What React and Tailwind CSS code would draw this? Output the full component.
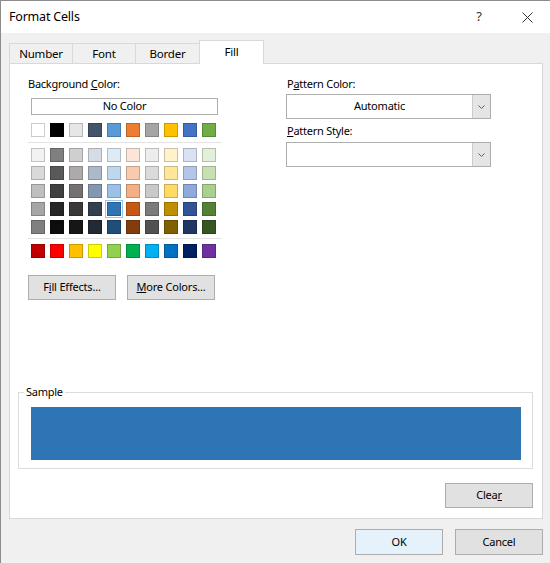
import React from "react";

// Office theme palette (top row), tints/shades below, then standard colours
const THEME = ["#FFFFFF", "#000000", "#E7E6E6", "#44546A", "#5B9BD5", "#ED7D31", "#A5A5A5", "#FFC000", "#4472C4", "#70AD47"];
const TINTS = [
  ["#F2F2F2", "#7F7F7F", "#D0CECE", "#D6DCE4", "#DDEBF7", "#FCE4D6", "#EDEDED", "#FFF2CC", "#D9E1F2", "#E2EFDA"],
  ["#D9D9D9", "#595959", "#AEAAAA", "#ACB9CA", "#BDD7EE", "#F8CBAD", "#DBDBDB", "#FFE699", "#B4C6E7", "#C6E0B4"],
  ["#BFBFBF", "#404040", "#757171", "#8497B0", "#9BC2E6", "#F4B084", "#C9C9C9", "#FFD966", "#8EA9DB", "#A9D08E"],
  ["#A6A6A6", "#262626", "#3A3838", "#333F4F", "#2F75B5", "#C65911", "#7B7B7B", "#BF8F00", "#305496", "#548235"],
  ["#808080", "#0D0D0D", "#171616", "#222A35", "#1F4E78", "#833C0C", "#525252", "#806000", "#203764", "#375623"],
];
const STANDARD = ["#C00000", "#FF0000", "#FFC000", "#FFFF00", "#92D050", "#00B050", "#00B0F0", "#0070C0", "#002060", "#7030A0"];

const SELECTED = "#2F75B5";

const Swatch = ({ color }) => (
  <div
    className={
      color === SELECTED
        ? "h-[14px] w-[14px] border border-black/20 outline-1 outline-offset-1 outline-[#9cc5ea]"
        : "h-[14px] w-[14px] border border-black/20"
    }
    style={{ backgroundColor: color }}
  />
);

const SwatchRow = ({ colors }) => (
  <div className="flex gap-[5px]">
    {colors.map((c, i) => (
      <Swatch key={i} color={c} />
    ))}
  </div>
);

const Btn = ({ children, className = "" }) => (
  <button className={"flex h-[25px] w-[88px] items-center justify-center border border-[#adadad] bg-[#e1e1e1] text-[11px] tracking-[-0.2px] text-black " + className}>
    {children}
  </button>
);

const Combo = ({ value }) => (
  <div className="flex h-[25px] w-[205px] border border-[#adadad] bg-white">
    <div className="flex flex-1 items-center justify-center text-[11px] tracking-[-0.2px]">{value}</div>
    <div className="flex w-[18px] items-center justify-center border-l border-[#cccccc] bg-[#e5e5e5]">
      <svg width="7" height="4" viewBox="0 0 7 4">
        <path d="M0.5 0.5 L3.5 3.5 L6.5 0.5" fill="none" stroke="#606060" strokeWidth="1" />
      </svg>
    </div>
  </div>
);

const Tab = ({ label, width, active }) =>
  active ? (
    <div className={"relative z-10 -mb-px flex h-[24px] items-center justify-center border border-b-0 border-[#d9d9d9] bg-white pb-[2px] text-[11.5px] tracking-[-0.2px] " + width}>
      {label}
    </div>
  ) : (
    <div className={"-mr-px flex h-[20px] items-center justify-center border border-b-0 border-[#d9d9d9] bg-[#f0f0f0] text-[11.5px] tracking-[-0.2px] " + width}>
      {label}
    </div>
  );

export default function App() {
  return (
    <div
      className="flex h-[563px] w-[550px] flex-col overflow-hidden border-l border-t border-[#8c8c8c] bg-[#f0f0f0] text-black"
      style={{ fontFamily: '"Noto Sans", "Open Sans", sans-serif' }}
    >
      {/* Title bar */}
      <div className="flex h-[32px] shrink-0 items-center bg-white pl-[8px] pr-[17px]">
        <span className="text-[12.5px] tracking-[-0.2px]">Format Cells</span>
        <span className="ml-auto text-[13px] text-[#333]">?</span>
        <svg className="ml-[40px]" width="11" height="11" viewBox="0 0 11 11">
          <path d="M0.5 0.5 L10.5 10.5 M10.5 0.5 L0.5 10.5" stroke="#333" strokeWidth="1" />
        </svg>
      </div>

      <div className="pl-[8px] pt-[7px]">
        {/* Tabs */}
        <div className="flex h-[23px] items-end">
          <Tab label="Number" width="w-[64px]" />
          <Tab label="Font" width="w-[64px]" />
          <Tab label="Border" width="w-[65px]" />
          <Tab label="Fill" width="w-[65px]" active />
        </div>

        {/* Fill page */}
        <div className="flex h-[456px] w-[534px] flex-col border border-[#d9d9d9] bg-white text-[11px] tracking-[-0.25px]">
          <div className="flex">
            {/* Background colour */}
            <div className="ml-[18px] flex w-[194px] flex-col">
              <div className="mt-[12px] h-[16px] leading-[16px]">
                Background <u>C</u>olor:
              </div>
              <div className="ml-[3px] mt-[6px] flex h-[17px] w-[187px] items-center justify-center border border-[#adadad]">
                No Color
              </div>
              <div className="ml-[3px] mt-[8px]">
                <SwatchRow colors={THEME} />
              </div>
              <div className="mt-[5px] h-px w-[194px] bg-[#e3e3e3]" />
              <div className="ml-[3px] mt-[5px] flex flex-col gap-[4px]">
                {TINTS.map((row, i) => (
                  <SwatchRow key={i} colors={row} />
                ))}
              </div>
              <div className="mt-[4px] h-px w-[194px] bg-[#e3e3e3]" />
              <div className="ml-[3px] mt-[5px]">
                <SwatchRow colors={STANDARD} />
              </div>
              <div className="mt-[17px] flex gap-[11px]">
                <Btn>
                  F<u>i</u>ll Effects...
                </Btn>
                <Btn>
                  <u>M</u>ore Colors...
                </Btn>
              </div>
            </div>

            {/* Pattern */}
            <div className="ml-[64px] flex flex-col">
              <div className="mt-[12px] h-[16px] pl-[1px] leading-[16px]">
                P<u>a</u>ttern Color:
              </div>
              <div className="mt-[2px]">
                <Combo value="Automatic" />
              </div>
              <div className="mt-[4px] h-[16px] pl-[1px] leading-[16px]">
                <u>P</u>attern Style:
              </div>
              <div className="mt-[3px]">
                <Combo value="" />
              </div>
            </div>
          </div>

          {/* Sample */}
          <div className="relative ml-[8px] mt-[92px] h-[77px] w-[515px] border border-[#dcdcdc] pl-[12px] pt-[14px]">
            <span className="absolute -top-[9px] left-[5px] bg-white px-[2px] leading-[16px]">Sample</span>
            <div className="h-[53px] w-[490px] bg-[#2E75B6]" />
          </div>

          <div className="mt-[14px] flex w-[523px] justify-end">
            <Btn>
              Clea<u>r</u>
            </Btn>
          </div>
        </div>
      </div>

      {/* Dialog buttons */}
      <div className="mt-[10px] flex w-[542px] justify-end gap-[12px]">
        <Btn className="h-[26px] border-[#0078d7] bg-[#e5f1fb]">OK</Btn>
        <Btn className="h-[26px]">Cancel</Btn>
      </div>
    </div>
  );
}
